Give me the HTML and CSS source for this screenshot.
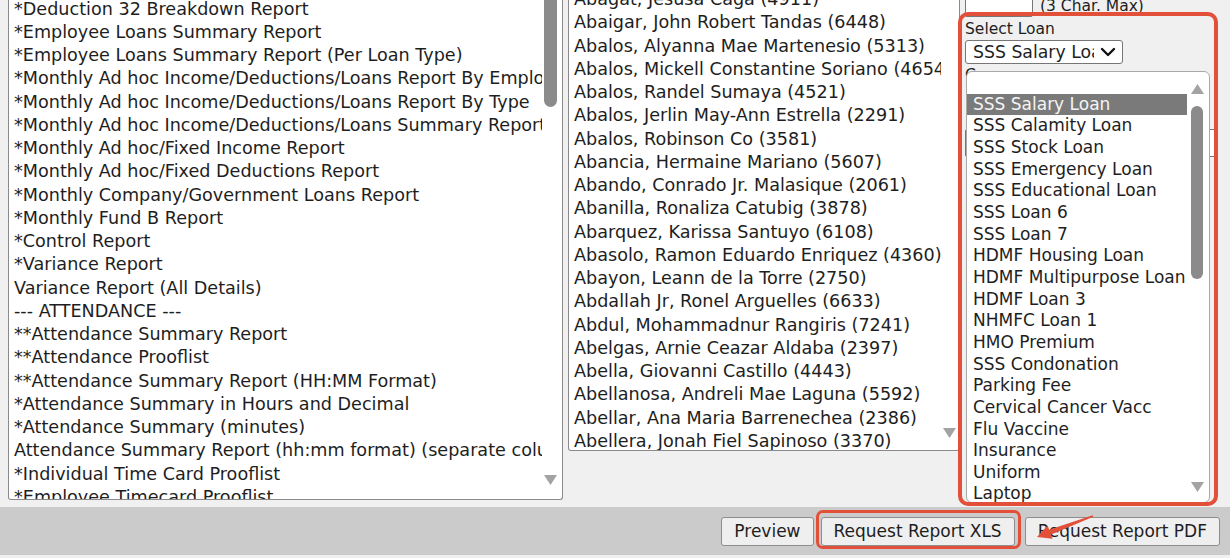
FILE: index.html
```html
<!DOCTYPE html>
<html>
<head>
<meta charset="utf-8">
<title>Reports</title>
<link rel="stylesheet" href="styles.css">
</head>
<body>
<div class="main">
  <div class="listbox reports">
    <div class="items">
      <div class="track">
        <div class="opt">*Deduction 32 Breakdown Report</div>
        <div class="opt">*Employee Loans Summary Report</div>
        <div class="opt">*Employee Loans Summary Report (Per Loan Type)</div>
        <div class="opt">*Monthly Ad hoc Income/Deductions/Loans Report By Employee</div>
        <div class="opt">*Monthly Ad hoc Income/Deductions/Loans Report By Type</div>
        <div class="opt">*Monthly Ad hoc Income/Deductions/Loans Summary Report</div>
        <div class="opt">*Monthly Ad hoc/Fixed Income Report</div>
        <div class="opt">*Monthly Ad hoc/Fixed Deductions Report</div>
        <div class="opt">*Monthly Company/Government Loans Report</div>
        <div class="opt">*Monthly Fund B Report</div>
        <div class="opt">*Control Report</div>
        <div class="opt">*Variance Report</div>
        <div class="opt">Variance Report (All Details)</div>
        <div class="opt">--- ATTENDANCE ---</div>
        <div class="opt">**Attendance Summary Report</div>
        <div class="opt">**Attendance Prooflist</div>
        <div class="opt">**Attendance Summary Report (HH:MM Format)</div>
        <div class="opt">*Attendance Summary in Hours and Decimal</div>
        <div class="opt">*Attendance Summary (minutes)</div>
        <div class="opt">Attendance Summary Report (hh:mm format) (separate columns)</div>
        <div class="opt">*Individual Time Card Prooflist</div>
        <div class="opt">*Employee Timecard Prooflist</div>
      </div>
    </div>
    <div class="sb">
      <div class="thumb"></div>
      <svg class="arrow" width="13" height="10" viewBox="0 0 13 10"><polygon points="0,0 13,0 6.5,10" fill="#a3a3a3"/></svg>
    </div>
  </div>

  <div class="listbox employees">
    <div class="items">
      <div class="track">
        <div class="opt">Abagat, Jesusa Caga (4911)</div>
        <div class="opt">Abaigar, John Robert Tandas (6448)</div>
        <div class="opt">Abalos, Alyanna Mae Martenesio (5313)</div>
        <div class="opt">Abalos, Mickell Constantine Soriano (4654)</div>
        <div class="opt">Abalos, Randel Sumaya (4521)</div>
        <div class="opt">Abalos, Jerlin May-Ann Estrella (2291)</div>
        <div class="opt">Abalos, Robinson Co (3581)</div>
        <div class="opt">Abancia, Hermaine Mariano (5607)</div>
        <div class="opt">Abando, Conrado Jr. Malasique (2061)</div>
        <div class="opt">Abanilla, Ronaliza Catubig (3878)</div>
        <div class="opt">Abarquez, Karissa Santuyo (6108)</div>
        <div class="opt">Abasolo, Ramon Eduardo Enriquez (4360)</div>
        <div class="opt">Abayon, Leann de la Torre (2750)</div>
        <div class="opt">Abdallah Jr, Ronel Arguelles (6633)</div>
        <div class="opt">Abdul, Mohammadnur Rangiris (7241)</div>
        <div class="opt">Abelgas, Arnie Ceazar Aldaba (2397)</div>
        <div class="opt">Abella, Giovanni Castillo (4443)</div>
        <div class="opt">Abellanosa, Andreli Mae Laguna (5592)</div>
        <div class="opt">Abellar, Ana Maria Barrenechea (2386)</div>
        <div class="opt">Abellera, Jonah Fiel Sapinoso (3370)</div>
      </div>
    </div>
    <div class="sb">
      <svg class="arrow" width="13" height="10" viewBox="0 0 13 10"><polygon points="0,0 13,0 6.5,10" fill="#a3a3a3"/></svg>
    </div>
  </div>

  <div class="side">
    <div class="code-row">
      <div class="textbox code"></div>
      <span class="hint">(3 Char. Max)</span>
    </div>
    <div class="label">Select Loan</div>
    <div class="select">
      <span class="val">SSS Salary Loan</span>
      <svg class="chev" width="16" height="10" viewBox="0 0 16 10"><polyline points="2,2 8,8 14,2" fill="none" stroke="#111" stroke-width="2.4" stroke-linecap="round" stroke-linejoin="round"/></svg>
    </div>
    <div class="label under">Currency</div>
    <div class="textbox wide"></div>

    <div class="popup">
      <div class="pitems">
        <div class="popt"></div>
        <div class="popt hl">SSS Salary Loan</div>
        <div class="popt">SSS Calamity Loan</div>
        <div class="popt">SSS Stock Loan</div>
        <div class="popt">SSS Emergency Loan</div>
        <div class="popt">SSS Educational Loan</div>
        <div class="popt">SSS Loan 6</div>
        <div class="popt">SSS Loan 7</div>
        <div class="popt">HDMF Housing Loan</div>
        <div class="popt">HDMF Multipurpose Loan</div>
        <div class="popt">HDMF Loan 3</div>
        <div class="popt">NHMFC Loan 1</div>
        <div class="popt">HMO Premium</div>
        <div class="popt">SSS Condonation</div>
        <div class="popt">Parking Fee</div>
        <div class="popt">Cervical Cancer Vacc</div>
        <div class="popt">Flu Vaccine</div>
        <div class="popt">Insurance</div>
        <div class="popt">Uniform</div>
        <div class="popt">Laptop</div>
      </div>
      <div class="psb">
        <svg class="up" width="13" height="10" viewBox="0 0 13 10"><polygon points="0,10 13,10 6.5,0" fill="#a3a3a3"/></svg>
        <div class="pthumb"></div>
        <svg class="down" width="13" height="10" viewBox="0 0 13 10"><polygon points="0,0 13,0 6.5,10" fill="#a3a3a3"/></svg>
      </div>
    </div>
  </div>
</div>

<div class="footer">
  <button class="btn">Preview</button>
  <button class="btn btn-xls">Request Report XLS</button>
  <button class="btn">Request Report PDF</button>
</div>

<div class="callout loan-callout"></div>
<div class="callout xls-callout"></div>
<svg class="pointer" width="1230" height="558" viewBox="0 0 1230 558">
  <polygon points="1092.7,515.3 1049.2,529.8 1047.6,525.5 1037,537 1052.6,538.7 1051,534.4 1093.3,516.7" fill="#e2503a"/>
</svg>
</body>
</html>
```

FILE: styles.css
```css
html, body {
  margin: 0;
  padding: 0;
}

body {
  width: 1230px;
  height: 558px;
  overflow: hidden;
  position: relative;
  background: #f0f0f0;
  font-family: "DejaVu Sans", Verdana, sans-serif;
  color: #1e1e1e;
}

.main {
  display: flex;
  align-items: flex-start;
  gap: 5px;
  height: 507px;
  padding-left: 8px;
  box-sizing: border-box;
}

.listbox {
  display: flex;
  background: #fff;
  border: 1px solid #8a8a8a;
  border-top: none;
  border-radius: 0 0 3px 3px;
  box-sizing: border-box;
  overflow: hidden;
}

.reports {
  width: 555px;
  height: 500px;
}

.employees {
  width: 392px;
  height: 451px;
}

.items {
  flex: 1;
  min-width: 0;
  overflow: hidden;
  padding-left: 5px;
  font-size: 17.6px;
}

.reports .track {
  margin-top: -2.5px;
}

.employees .track {
  margin-top: -12px;
}

.opt {
  height: 23.25px;
  line-height: 23.25px;
  white-space: nowrap;
  overflow: hidden;
}

.sb {
  display: flex;
  flex-direction: column;
  justify-content: space-between;
  align-items: flex-start;
}

.reports .sb {
  width: 20px;
  padding-left: 2px;
  box-sizing: border-box;
}

.employees .sb {
  width: 18px;
  padding-left: 2px;
  justify-content: flex-end;
  box-sizing: border-box;
}

.thumb {
  width: 13px;
  height: 107px;
  background: #8b8b8b;
  border-radius: 0 0 7px 7px;
}

.reports .arrow {
  margin-bottom: 14px;
}

.employees .arrow {
  margin-bottom: 12px;
}

.side {
  position: relative;
  flex: 1;
  display: flex;
  flex-direction: column;
  align-items: flex-start;
}

.code-row {
  display: flex;
  align-items: center;
  gap: 7px;
  margin-top: -8px;
  height: 25px;
}

.textbox {
  background: #fff;
  border: 1px solid #767676;
  border-radius: 2px;
  box-sizing: border-box;
}

.textbox.code {
  width: 68px;
  height: 25px;
}

.hint {
  font-size: 15.5px;
  margin-top: 2px;
}

.label {
  font-size: 15.5px;
  line-height: 18px;
  margin-top: 3px;
}

.label.under {
  margin-top: 2px;
}

.select {
  display: flex;
  align-items: center;
  width: 158px;
  height: 24px;
  margin-top: 2px;
  padding-left: 7px;
  box-sizing: border-box;
  background: #fff;
  border: 1px solid #767676;
  border-radius: 3px;
  font-size: 17.3px;
}

.select .val {
  width: 121px;
  overflow: hidden;
  white-space: nowrap;
}

.select .chev {
  margin-left: 6px;
}

.textbox.wide {
  width: 253px;
  height: 28px;
  margin-top: 45px;
}

.popup {
  position: absolute;
  left: 1px;
  top: 71px;
  width: 244px;
  height: 432px;
  display: flex;
  background: #fff;
  border: 1px solid #a9a9a9;
  border-radius: 6px;
  box-sizing: border-box;
  overflow: hidden;
  z-index: 2;
}

.pitems {
  flex: 1;
  min-width: 0;
  overflow: hidden;
  font-size: 17px;
}

.popt {
  height: 21.67px;
  line-height: 21.67px;
  padding-left: 6px;
  white-space: nowrap;
  overflow: hidden;
}

.popt.hl {
  background: #7a7a7a;
  color: #f4f4f4;
}

.psb {
  width: 22px;
  padding-left: 4px;
  box-sizing: border-box;
  display: flex;
  flex-direction: column;
  align-items: flex-start;
}

.psb .up {
  margin-top: 12px;
}

.pthumb {
  width: 12px;
  height: 173px;
  margin-top: 12px;
  background: #8b8b8b;
  border-radius: 6px;
}

.psb .down {
  margin-top: auto;
  margin-bottom: 10px;
}

.footer {
  display: flex;
  justify-content: flex-end;
  align-items: center;
  gap: 7px;
  height: 48px;
  padding-right: 10px;
  background: #cbcbcb;
  box-sizing: border-box;
}

.btn {
  height: 29px;
  padding: 0 12px;
  font-family: "DejaVu Sans", Verdana, sans-serif;
  font-size: 17px;
  color: #1e1e1e;
  background: #efefef;
  border: 1px solid #8d8d8d;
  border-radius: 3px;
}

.btn-xls {
  margin-right: 3px;
}

.callout {
  position: absolute;
  border: 4px solid #e2503a;
  box-sizing: border-box;
  z-index: 5;
}

.loan-callout {
  left: 958px;
  top: 12px;
  width: 260px;
  height: 494px;
  border-radius: 10px;
}

.xls-callout {
  left: 816px;
  top: 510px;
  width: 205px;
  height: 39px;
  border-width: 3px;
  border-radius: 7px;
}

.pointer {
  position: absolute;
  left: 0;
  top: 0;
  pointer-events: none;
  z-index: 6;
}
```
